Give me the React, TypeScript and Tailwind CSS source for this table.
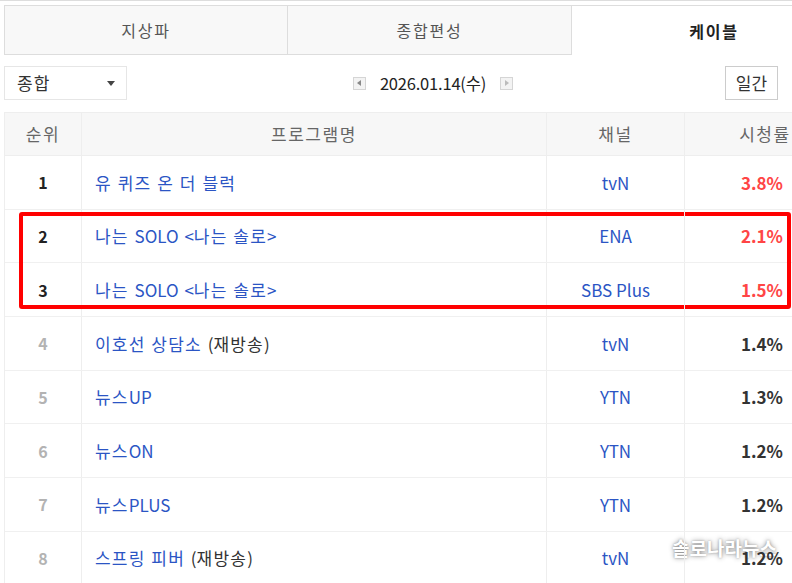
import React from "react";

type Row = { rank: number; title: string; extra?: string; ch: string; rate: string; top: boolean };

const rows: Row[] = [
  { rank: 1, title: "유 퀴즈 온 더 블럭", ch: "tvN", rate: "3.8%", top: true },
  { rank: 2, title: "나는 SOLO <나는 솔로>", ch: "ENA", rate: "2.1%", top: true },
  { rank: 3, title: "나는 SOLO <나는 솔로>", ch: "SBS Plus", rate: "1.5%", top: true },
  { rank: 4, title: "이호선 상담소", extra: " (재방송)", ch: "tvN", rate: "1.4%", top: false },
  { rank: 5, title: "뉴스UP", ch: "YTN", rate: "1.3%", top: false },
  { rank: 6, title: "뉴스ON", ch: "YTN", rate: "1.2%", top: false },
  { rank: 7, title: "뉴스PLUS", ch: "YTN", rate: "1.2%", top: false },
  { rank: 8, title: "스프링 피버", extra: " (재방송)", ch: "tvN", rate: "1.2%", top: false },
];

function Ko({ text }: { text: string }) {
  const parts = text.split(/([\uAC00-\uD7A3]+)/);
  return (
    <>
      {parts.map((p, i) =>
        /[\uAC00-\uD7A3]/.test(p) ? (
          <span key={i} className="tracking-[1.2px]">
            {p}
          </span>
        ) : (
          <span key={i}>{p}</span>
        )
      )}
    </>
  );
}

export default function App() {
  return (
    <div
      className="relative w-[792px] h-[583px] overflow-hidden bg-white text-[#333]"
      style={{ fontFamily: '"Noto Sans CJK KR", "Noto Sans", sans-serif' }}
    >
      <div className="w-[860px] border-t border-[#ddd] pt-[4px] pl-[4px]">
        {/* Tabs */}
        <div className="flex h-[50px] text-[16px] tracking-[1.8px]">
          <div className="w-[284px] flex items-center justify-center border border-[#ddd] bg-[#f8f8f8] text-[#555]">
            지상파
          </div>
          <div className="w-[284px] flex items-center justify-center border-y border-r border-[#ddd] bg-[#f8f8f8] text-[#555]">
            종합편성
          </div>
          <div className="w-[284px] flex items-center justify-center border-t border-[#ddd] bg-white font-bold text-[#222]">
            케이블
          </div>
        </div>

        {/* Controls */}
        <div className="mt-[11px] flex h-[34px] w-[852px] items-center">
          <div className="flex h-[34px] w-[123px] items-center justify-between border border-[#e6e6e6] pl-[12px] pr-[11px] text-[17px] text-[#333]">
            <span className="tracking-[1px]">종합</span>
            <svg width="8" height="5" viewBox="0 0 8 5">
              <path d="M0 0 L8 0 L4 5 Z" fill="#444" />
            </svg>
          </div>
          <div className="flex flex-1 items-center justify-center pl-[14px]">
            <div className="flex h-[13px] w-[13px] items-center justify-center border border-[#d5d5d5] bg-[#f3f3f3]">
              <svg width="4" height="6" viewBox="0 0 4 6">
                <path d="M4 0 L0 3 L4 6 Z" fill="#888" />
              </svg>
            </div>
            <span className="mx-[14px] text-[16.5px] tracking-[-0.2px] text-[#222]">2026.01.14(수)</span>
            <div className="flex h-[13px] w-[13px] items-center justify-center border border-[#d5d5d5] bg-[#f3f3f3]">
              <svg width="4" height="6" viewBox="0 0 4 6">
                <path d="M0 0 L4 3 L0 6 Z" fill="#bbb" />
              </svg>
            </div>
          </div>
          <div className="mr-[78px] flex h-[34px] w-[53px] items-center justify-center border border-[#ccc] text-[17px] text-[#333]">
            일간
          </div>
        </div>

        {/* Table */}
        <div className="mt-[12px] w-[840px] border-l border-t border-[#eee] text-[17px]">
          <div className="grid h-[43px] grid-cols-[76px_465px_138px_161px] border-b border-[#eee] bg-[#f7f7f7] text-[#666] tracking-[1.6px]">
            <div className="flex items-center justify-center">순위</div>
            <div className="flex items-center justify-center border-l border-[#eee]">프로그램명</div>
            <div className="flex items-center justify-center border-l border-[#eee]">채널</div>
            <div className="flex items-center justify-center border-l border-[#eee]">시청률</div>
          </div>
          {rows.map((r) => (
            <div
              key={r.rank}
              className="grid h-[53.7px] grid-cols-[76px_465px_138px_161px] border-b border-[#f0f0f0]"
            >
              <div
                className={`flex items-center justify-center text-[16px] font-bold ${r.top ? "text-[#222]" : "text-[#b3b3b3]"}`}
              >
                {r.rank}
              </div>
              <div className="flex items-center whitespace-pre border-l border-[#eee] pl-[13px] [word-spacing:2px]">
                <span className="text-[#2b55c4]">
                  <Ko text={r.title} />
                </span>
                {r.extra && (
                  <span className="text-[#333]">
                    <Ko text={r.extra} />
                  </span>
                )}
              </div>
              <div className="flex items-center justify-center border-l border-[#eee] text-[#2b55c4]">{r.ch}</div>
              <div
                className={`relative z-10 flex items-center justify-end border-l border-[#eee] pr-[62px] font-bold ${r.top ? "text-[#ff4545]" : "text-[#333]"}`}
              >
                {r.rate}
              </div>
            </div>
          ))}
        </div>
      </div>

      {/* Highlight box */}
      <div className="pointer-events-none absolute left-[19px] top-[212px] h-[97px] w-[772px] rounded-[3px] border-[4px] border-[#ff0000]" />

      {/* Watermark */}
      <div
        className="pointer-events-none absolute left-[672px] top-[534px] z-0 whitespace-nowrap text-[19px] font-bold text-white"
        style={{ textShadow: "0 0 5px rgba(0,0,0,0.45), 0 0 2px rgba(0,0,0,0.25)" }}
      >
        솔로나라뉴스
      </div>
    </div>
  );
}
